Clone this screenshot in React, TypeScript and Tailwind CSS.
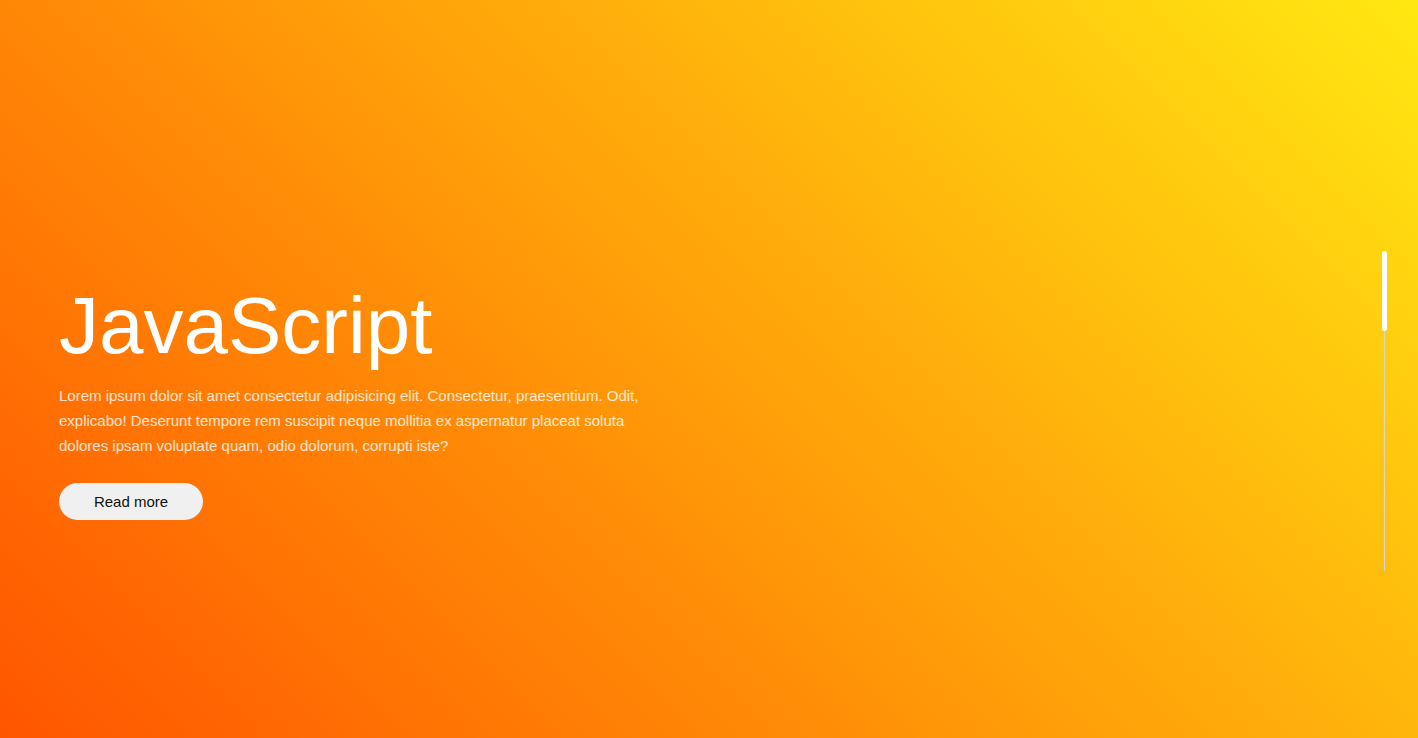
import React from 'react'

const App = () => {
  return (
    <div
      className="relative w-full h-[738px] overflow-hidden bg-[linear-gradient(45deg,#ff5500,#ffe812)]"
      style={{ fontFamily: '"Liberation Sans", Arial, sans-serif' }}
    >
      <div className="pl-[59px] pt-[280px]">
        <h1 className="text-[80px] leading-[92px] text-white font-normal">JavaScript</h1>
        <p className="mt-[11px] w-[600px] text-[15px] leading-[25px] text-white/80">
          Lorem ipsum dolor sit amet consectetur adipisicing elit. Consectetur, praesentium. Odit,
          explicabo! Deserunt tempore rem suscipit neque mollitia ex aspernatur placeat soluta
          dolores ipsam voluptate quam, odio dolorum, corrupti iste?
        </p>
        <button className="mt-[25px] w-[144px] h-[37px] pt-[2px] rounded-full bg-[#f0f0f0] text-[15px] text-[#111]">
          Read more
        </button>
      </div>

      {/* scroll indicator */}
      <div className="absolute left-[1382px] top-[251px] w-[5px] h-[320px] flex justify-center">
        <div className="w-px h-full bg-[#d6d6d6]"></div>
        <div className="absolute top-0 left-0 w-[5px] h-[80px] rounded-full bg-white"></div>
      </div>
    </div>
  )
}

export default App
